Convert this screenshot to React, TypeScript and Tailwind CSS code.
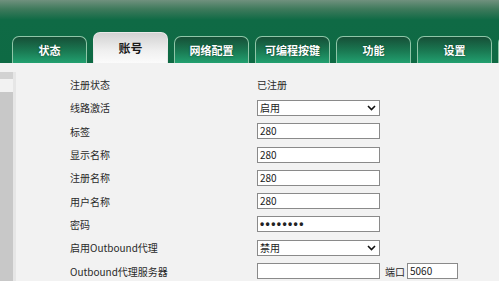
import React from "react";

const tabs = ["状态", "账号", "网络配置", "可编程按键", "功能", "设置", ""];

const rows: { label: string; kind: "text" | "select" | "input" | "password" | "port"; value?: string }[] = [
  { label: "注册状态", kind: "text", value: "已注册" },
  { label: "线路激活", kind: "select", value: "启用" },
  { label: "标签", kind: "input", value: "280" },
  { label: "显示名称", kind: "input", value: "280" },
  { label: "注册名称", kind: "input", value: "280" },
  { label: "用户名称", kind: "input", value: "280" },
  { label: "密码", kind: "password", value: "••••••••" },
  { label: "启用Outbound代理", kind: "select", value: "禁用" },
  { label: "Outbound代理服务器", kind: "port", value: "" },
];

const font = { fontFamily: '"Noto Sans CJK SC", "Noto Sans", sans-serif' };

const Chevron = () => (
  <svg width="9" height="6" viewBox="0 0 9 6" className="mr-[3px]">
    <path d="M1 1 L4.5 4.5 L8 1" fill="none" stroke="#111" strokeWidth="1.6" />
  </svg>
);

const Box = ({ children, w = "w-[123px]" }: { children?: React.ReactNode; w?: string }) => (
  <div className={`${w} h-[16px] border border-[#8a8a8a] bg-white flex items-center justify-between pl-[2px] text-[10px] leading-none text-[#222]`}>
    {children}
  </div>
);

export default function App() {
  return (
    <div className="w-[499px] h-[281px] overflow-hidden bg-[#f2f2f2]" style={font}>
      {/* header */}
      <div className="h-[63px] overflow-hidden bg-[linear-gradient(to_bottom,#70917e_0px,#3f7a5c_9px,#0f6a45_20px,#0e6a44_100%)] flex items-end pl-[12px] gap-[6px]">
        {tabs.map((t, i) =>
          t === "账号" ? (
            <div
              key={i}
              className="w-[75px] h-[31px] shrink-0 rounded-t-[7px] border border-b-0 border-[#e8e8e8] bg-[linear-gradient(to_bottom,#d2d2d2,#f0f0f0_60%,#fbfbfb)] flex items-center justify-center text-[12px] font-bold text-[#1a1a1a]"
            >
              {t}
            </div>
          ) : (
            <div
              key={i}
              className="w-[75px] h-[27px] shrink-0 rounded-t-[7px] border border-b-0 border-[#8fc6a8] bg-[linear-gradient(to_bottom,#164f37,#1a7a53_55%,#22a070)] flex items-center justify-center text-[11px] font-bold text-white [text-shadow:0_0_2px_#0a3a25]"
            >
              {t}
            </div>
          )
        )}
      </div>

      {/* body */}
      <div className="flex h-[218px]">
        <div className="w-[13px] flex flex-col">
          <div className="h-[9px]" />
          <div className="h-[7px] bg-[#d2d2d2]" />
          <div className="h-[13px]" />
          <div className="flex-1 bg-[#c8c8c8]" />
        </div>
        <div className="w-[3px] bg-[#e6e6e6] mt-[9px]" />
        <div className="flex-1 pt-[10px] text-[10px] text-[#2a2a2a]">
          {rows.map((r) => (
            <div key={r.label} className="h-[23.3px] flex items-center">
              <div className="w-[241px] pl-[54px]">{r.label}</div>
              {r.kind === "text" && <div>{r.value}</div>}
              {r.kind === "select" && (
                <Box>
                  <span>{r.value}</span>
                  <Chevron />
                </Box>
              )}
              {r.kind === "input" && (
                <Box>
                  <span>{r.value}</span>
                </Box>
              )}
              {r.kind === "password" && (
                <Box>
                  <span className="text-[12px] font-bold tracking-[1.4px] font-['Liberation_Sans',sans-serif]">{r.value}</span>
                </Box>
              )}
              {r.kind === "port" && (
                <div className="flex items-center">
                  <Box />
                  <span className="ml-[5px] mr-[2px]">端口</span>
                  <Box w="w-[51px]">
                    <span>5060</span>
                  </Box>
                </div>
              )}
            </div>
          ))}
        </div>
      </div>
    </div>
  );
}
